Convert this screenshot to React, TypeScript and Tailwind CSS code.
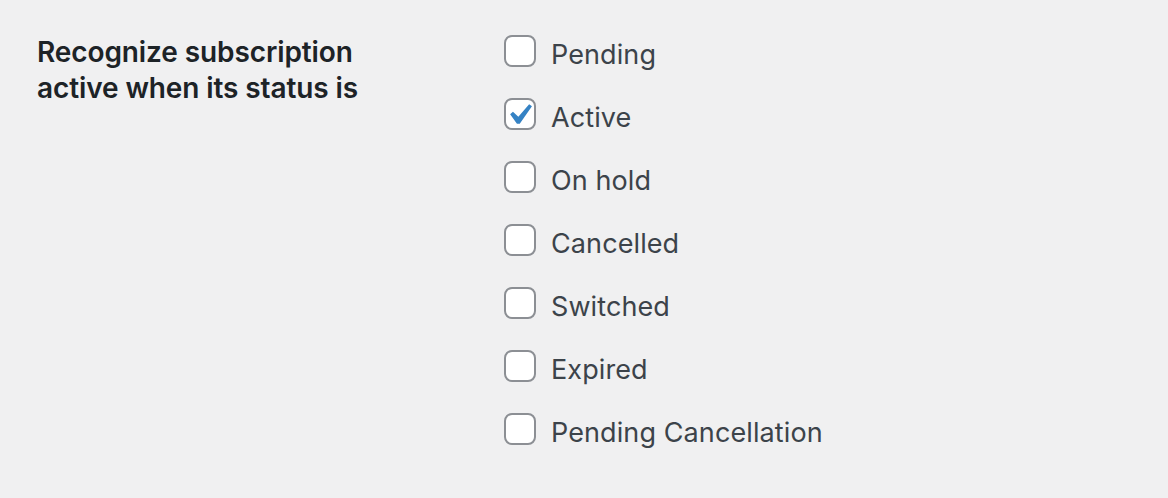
import React from "react";

const options = [
  { label: "Pending", checked: false },
  { label: "Active", checked: true },
  { label: "On hold", checked: false },
  { label: "Cancelled", checked: false },
  { label: "Switched", checked: false },
  { label: "Expired", checked: false },
  { label: "Pending Cancellation", checked: false },
];

function Box({ checked }: { checked: boolean }) {
  return (
    <span className="relative block w-[32px] h-[32px] shrink-0 rounded-[8px] border-2 border-[#8c8f94] bg-white">
      {checked && (
        <svg
          viewBox="0 0 20 20"
          className="absolute left-[-8px] top-[-6px] w-[42px] h-[42px]"
        >
          <path
            d="M14.83 4.89l1.34.94-5.81 8.38H9.02L5.78 9.67l1.34-1.25 2.57 2.4z"
            fill="#3582c4"
          />
        </svg>
      )}
    </span>
  );
}

export default function App() {
  return (
    <div
      className="w-[1168px] h-[498px] bg-[#f0f0f1] flex"
      style={{ fontFamily: "Inter, 'Noto Sans', sans-serif" }}
    >
      <div className="w-[504px] pl-[37px] pt-[34px] shrink-0">
        <div className="text-[28px] leading-[36px] font-semibold text-[#1d2327] tracking-[-0.1px]">
          Recognize subscription
          <br />
          active when its status is
        </div>
      </div>
      <div className="flex flex-col gap-[31px] pt-[35px]">
        {options.map((o) => (
          <label key={o.label} className="flex items-start h-[32px]">
            <Box checked={o.checked} />
            <span className="ml-[15px] mt-[4px] text-[27px] leading-[32px] tracking-[0.1px] text-[#3c434a] whitespace-nowrap">
              {o.label}
            </span>
          </label>
        ))}
      </div>
    </div>
  );
}
